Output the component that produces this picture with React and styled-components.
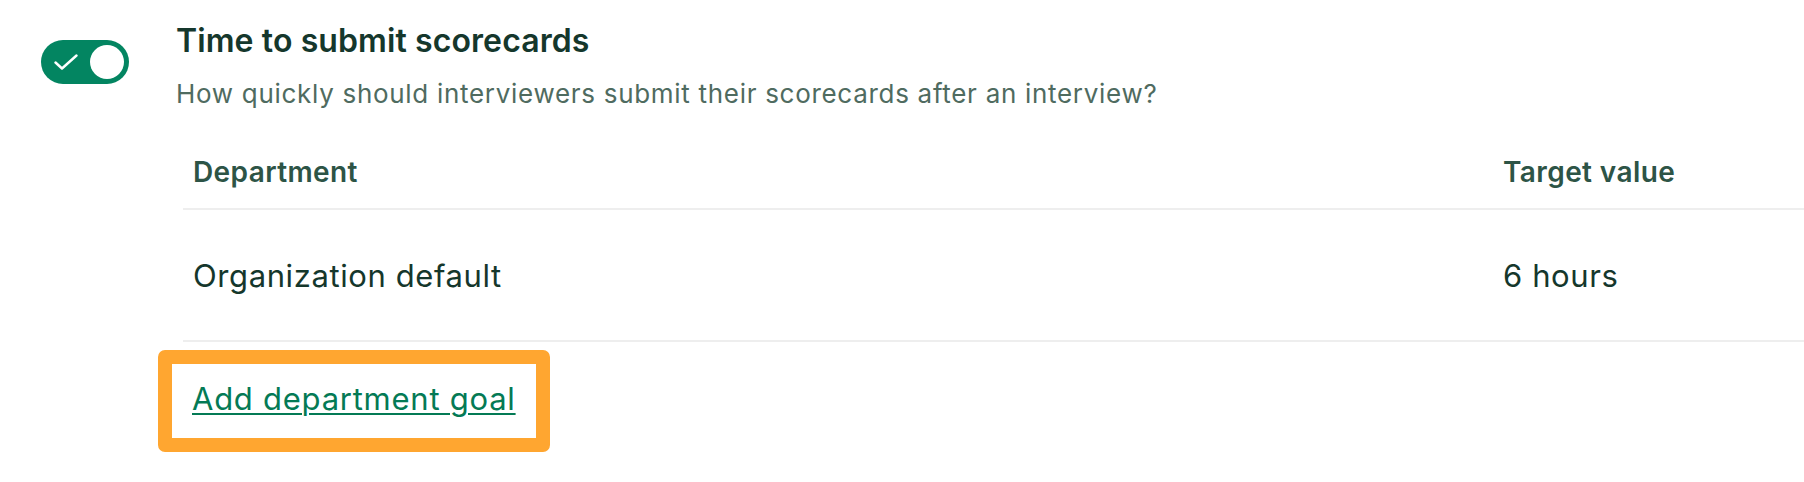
import React from "react";
import styled, { createGlobalStyle } from "styled-components";

const Global = createGlobalStyle`
  html, body { margin: 0; padding: 0; background: #ffffff; }
  body { font-family: Inter, "Noto Sans", sans-serif; overflow: hidden; }
`;

const Page = styled.div`
  display: flex;
  align-items: flex-start;
  gap: 47px;
  padding: 23px 0 0 41px;
  height: 482px;
  box-sizing: border-box;
`;

const ToggleTrack = styled.button`
  flex: none;
  margin-top: 17px;
  width: 88px;
  height: 44px;
  border: none;
  border-radius: 22px;
  background: #038561;
  display: flex;
  align-items: center;
  justify-content: space-between;
  padding: 0 5px 0 13px;
  box-sizing: border-box;
  cursor: pointer;
`;

const Knob = styled.span`
  width: 34px;
  height: 34px;
  border-radius: 50%;
  background: #ffffff;
`;

const Content = styled.div`
  flex: 1;
  min-width: 0;
  display: flex;
  flex-direction: column;
`;

const Title = styled.h2`
  margin: 0;
  font-size: 32px;
  line-height: 36px;
  font-weight: 600;
  letter-spacing: 0.1px;
  color: #15372c;
`;

const Subtitle = styled.p`
  margin: 19px 0 0;
  font-size: 26px;
  line-height: 32px;
  font-weight: 400;
  letter-spacing: 0.7px;
  color: #4f6b60;
`;

const Table = styled.div`
  margin: 26px 0 0 7px;
  display: grid;
  grid-template-columns: 1310px 1fr;
`;

const HeadCell = styled.div`
  padding: 20px 10px 20px 10px;
  font-size: 28px;
  line-height: 32px;
  font-weight: 600;
  letter-spacing: 0.4px;
  color: #2d5446;
  border-bottom: 2px solid #eeeeee;
`;

const Cell = styled.div`
  padding: 48px 10px 46px 10px;
  font-size: 31px;
  line-height: 36px;
  font-weight: 400;
  letter-spacing: 0.6px;
  color: #15372c;
  border-bottom: 2px solid #eeeeee;
`;

const Highlight = styled.div`
  align-self: flex-start;
  margin: 8px 0 0 -18px;
  border: 14px solid #ffa630;
  border-radius: 7px;
  padding: 17px 20px 21px 20px;
  background: #ffffff;
`;

const Link = styled.a`
  display: block;
  font-size: 31px;
  line-height: 36px;
  letter-spacing: 0.75px;
  color: #047a55;
  text-decoration: underline;
  text-decoration-thickness: 2px;
  text-underline-offset: 3px;
  cursor: pointer;
`;

function Check() {
  return (
    <svg width="24" height="16" viewBox="0 0 24 16" fill="none">
      <path d="M1.5 8.5 L8 14.5 L22.5 1.5" stroke="#ffffff" strokeWidth="2.4" strokeLinecap="round" strokeLinejoin="round" />
    </svg>
  );
}

export default function App() {
  return (
    <>
      <Global />
      <Page>
        <ToggleTrack aria-pressed="true">
          <Check />
          <Knob />
        </ToggleTrack>
        <Content>
          <Title>Time to submit scorecards</Title>
          <Subtitle>How quickly should interviewers submit their scorecards after an interview?</Subtitle>
          <Table>
            <HeadCell>Department</HeadCell>
            <HeadCell>Target value</HeadCell>
            <Cell>Organization default</Cell>
            <Cell>6 hours</Cell>
          </Table>
          <Highlight>
            <Link>Add department goal</Link>
          </Highlight>
        </Content>
      </Page>
    </>
  );
}
